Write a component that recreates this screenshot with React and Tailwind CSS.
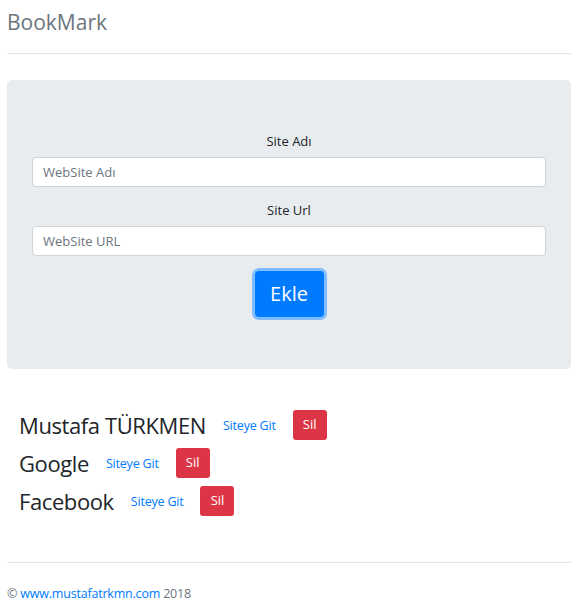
import React from 'react';

const sites = [
  { name: 'Mustafa TÜRKMEN', url: 'http://www.mustafatrkmn.com' },
  { name: 'Google', url: 'https://www.google.com' },
  { name: 'Facebook', url: 'https://www.facebook.com' },
];

export default function App() {
  return (
    <div className="min-h-[603px] bg-white px-[7px] text-[#212529] font-['Segoe_UI','Open_Sans',sans-serif] w-[578px]">
      <header className="pt-[8px]">
        <h1 className="text-[21px] leading-[28px] text-[#6c757d]">BookMark</h1>
        <hr className="mt-[17px] border-t border-[#e3e3e3]" />
      </header>

      <div className="mt-[26px] h-[289px] rounded-[5px] bg-[#e9ecef] px-[25px] pt-[51px]">
        <form className="flex flex-col">
          <label className="text-center text-[13px] leading-[20px]">Site Adı</label>
          <input
            type="text"
            placeholder="WebSite Adı"
            className="mt-[6px] h-[30px] w-full rounded-[4px] border border-[#ced4da] bg-white px-[10px] text-[13px] outline-none placeholder:text-[#6c757d]"
          />
          <label className="mt-[13px] text-center text-[13px] leading-[20px]">Site Url</label>
          <input
            type="text"
            placeholder="WebSite URL"
            className="mt-[6px] h-[30px] w-full rounded-[4px] border border-[#ced4da] bg-white px-[10px] text-[13px] outline-none placeholder:text-[#6c757d]"
          />
          <div className="mt-[15px] flex justify-center">
            <button
              type="button"
              className="h-[46px] w-[69px] rounded-[4px] bg-[#007bff] text-[20px] text-white ring-[3px] ring-[#80bdff]"
            >
              Ekle
            </button>
          </div>
        </form>
      </div>

      <ul className="mt-[41px] flex flex-col gap-[8px] pl-[12px]">
        {sites.map((s) => (
          <li key={s.name} className="flex h-[30px] items-center">
            <span className="text-[22px] leading-[30px] tracking-[-0.4px]">{s.name}</span>
            <a href={s.url} className="ml-[17px] mt-[3px] text-[12.5px] tracking-[-0.2px] text-[#007bff]">Siteye Git</a>
            <button
              type="button"
              className="ml-[17px] h-[30px] w-[34px] rounded-[3px] bg-[#dc3545] text-[13px] text-white"
            >
              Sil
            </button>
          </li>
        ))}
      </ul>

      <footer className="mt-[46px]">
        <hr className="border-t border-[#e3e3e3]" />
        <p className="mt-[21px] text-[12.5px] leading-[20px] tracking-[-0.2px] text-[#6c757d]">
          © <a href="http://www.mustafatrkmn.com" className="text-[#007bff]">www.mustafatrkmn.com</a> 2018
        </p>
      </footer>
    </div>
  );
}
